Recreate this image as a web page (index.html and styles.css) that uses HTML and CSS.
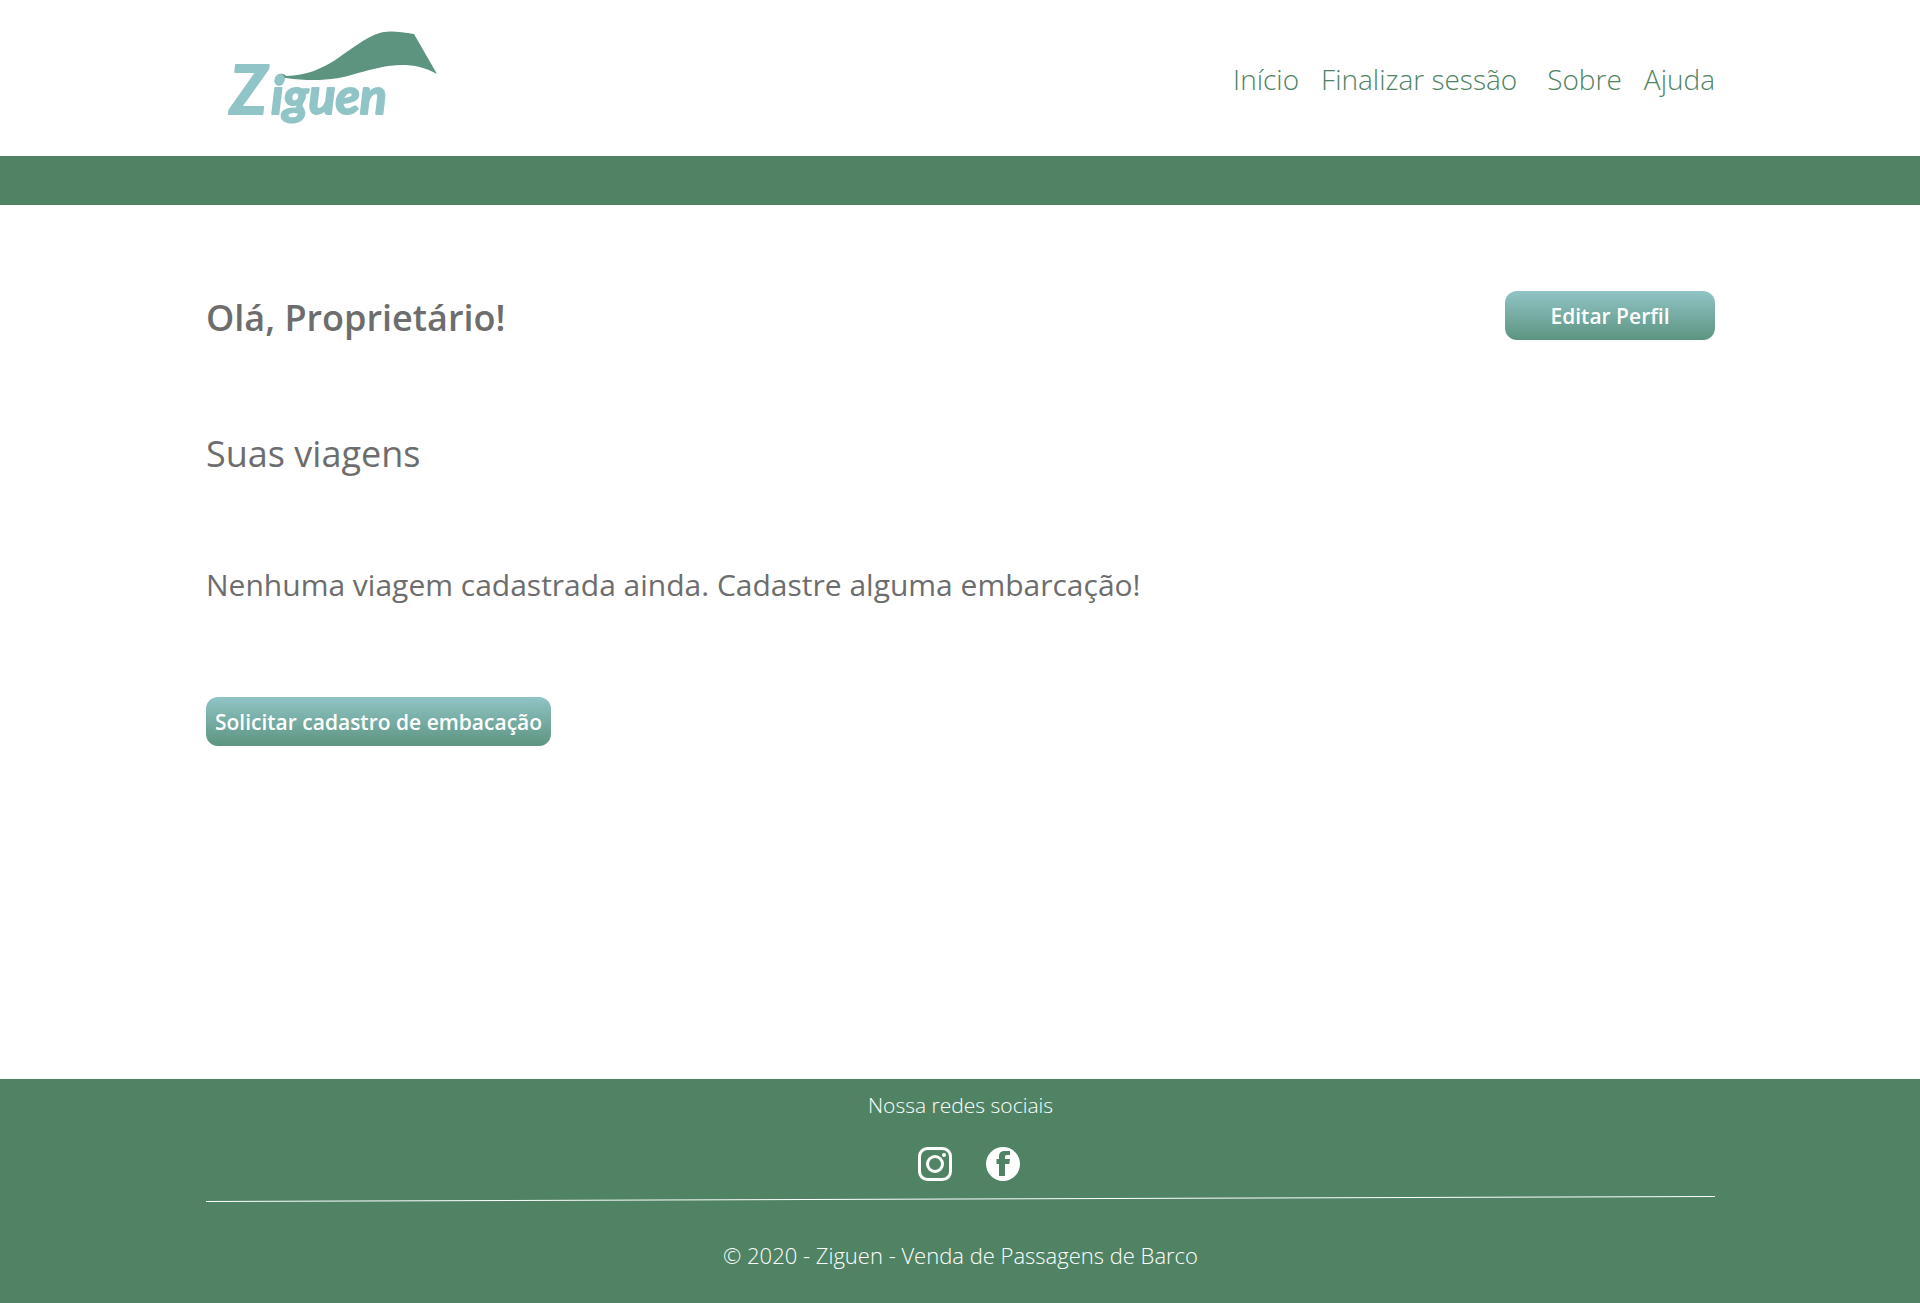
FILE: index.html
```html
<!DOCTYPE html>
<html lang="pt-BR">
<head>
<meta charset="utf-8">
<meta name="viewport" content="width=device-width, initial-scale=1">
<title>Ziguen - Venda de Passagens de Barco</title>
<link rel="stylesheet" href="styles.css">
</head>
<body>
<header class="header container">
  <a class="logo" href="#" aria-label="Ziguen">
    <svg width="232" height="120" viewBox="0 0 232 120">
      <text class="logo-initial" x="24" y="84">Z</text>
      <text class="logo-rest" x="65" y="84">iguen</text>
      <path d="M69 49C71 42 78 43 80 46C122 45 138 19 168 5C179 0 190 1 208 4L231 44C203 28 175 37 152 43C132 50 108 52 80 48Z" fill="#5c9480"/>
      <circle cx="74" cy="49" r="5" fill="#91c4c6"/>
    </svg>
  </a>
  <nav class="nav">
    <a href="#">Início</a>
    <a class="nav-session" href="#">Finalizar sessão</a>
    <a href="#">Sobre</a>
    <a href="#">Ajuda</a>
  </nav>
</header>
<div class="band"></div>
<main class="main container">
  <div class="greeting">
    <h1>Olá, Proprietário!</h1>
    <button class="button button-profile" type="button">Editar Perfil</button>
  </div>
  <h2>Suas viagens</h2>
  <p class="empty">Nenhuma viagem cadastrada ainda. Cadastre alguma embarcação!</p>
  <button class="button button-request" type="button">Solicitar cadastro de embacação</button>
</main>
<footer class="footer container">
  <p>Nossa redes sociais</p>
  <div class="social">
    <a href="#" aria-label="Instagram">
      <svg width="34" height="34" viewBox="0 0 34 34" fill="none" stroke="#fff" stroke-width="3">
        <rect x="1.5" y="1.5" width="31" height="31" rx="8"/>
        <circle cx="17" cy="17" r="7.5"/>
        <circle cx="26" cy="8" r="2" fill="#fff" stroke="none"/>
      </svg>
    </a>
    <a href="#" aria-label="Facebook">
      <svg width="34" height="34" viewBox="0 0 34 34">
        <circle cx="17" cy="17" r="17" fill="#fff"/>
        <path d="M13 29V17H10.500V12H13V9.500C13 5.500 15 4 19 4H24V8H21C19.300 8 19 8.700 19 10V12H24L23.300 17H19V29Z" fill="#508364"/>
      </svg>
    </a>
  </div>
  <svg class="divider" height="6" viewBox="0 0 1509 6" preserveAspectRatio="none"><path d="M0 5.500L1509 .5" stroke="#fff" vector-effect="non-scaling-stroke"/></svg>
  <p class="copyright">© 2020 - Ziguen - Venda de Passagens de Barco</p>
</footer>
</body>
</html>
```
FILE: styles.css
```css
* { box-sizing: border-box; }

body {
  display: flex;
  flex-direction: column;
  min-height: 100vh;
  margin: 0;
  background: #fff;
  color: #6d6d6d;
  font-family: "Open Sans", "Noto Sans", sans-serif;
}

h1, h2, p { margin: 0; }

.container { padding-inline: 206px 205px; }

.header {
  display: flex;
  justify-content: space-between;
  align-items: flex-start;
  height: 156px;
  padding-top: 30px;
}

.logo svg { display: block; }

.logo-initial,
.logo-rest {
  fill: #91c4c6;
  stroke: #91c4c6;
  stroke-width: 2;
  stroke-linejoin: round;
  font-family: Lato, sans-serif;
  font-style: italic;
  font-weight: 700;
}

.logo-initial { font-size: 66px; }
.logo-rest { font-size: 50px; }

.nav {
  display: flex;
  gap: 22px;
  padding-top: 27px;
  font-size: 28px;
  font-weight: 300;
  line-height: 44px;
}

.nav a {
  color: #508364;
  text-decoration: none;
}

.nav-session { margin-right: 8px; }

.band {
  height: 49px;
  background: #508364;
}

.main {
  flex: 1;
  display: flex;
  flex-direction: column;
  align-items: flex-start;
  padding-top: 86px;
  padding-bottom: 48px;
}

.greeting {
  align-self: stretch;
  display: flex;
  justify-content: space-between;
}

h1 {
  font-size: 36px;
  font-weight: 600;
  line-height: 54px;
}

h2 {
  margin-top: 82px;
  font-size: 36px;
  font-weight: 400;
  line-height: 54px;
}

.empty {
  margin-top: 80px;
  font-size: 30px;
  line-height: 48px;
}

.button {
  height: 49px;
  padding: 0;
  border: 0;
  border-radius: 12px;
  background: linear-gradient(#91c4c6, #5c9480);
  color: #fff;
  font-family: inherit;
  font-size: 21px;
  font-weight: 600;
}

.button-profile { width: 210px; }

.button-request {
  width: 345px;
  margin-top: 88px;
}

.footer {
  display: flex;
  flex-direction: column;
  align-items: center;
  padding-top: 10px;
  padding-bottom: 32px;
  background: #508364;
  color: #fff;
  font-size: 21px;
  font-weight: 300;
  line-height: 32px;
}

.social {
  display: flex;
  gap: 34px;
  margin-top: 26px;
  padding-left: 16px;
}

.social svg { display: block; }

.divider {
  width: 100%;
  margin: 15px 0 37px;
}

.copyright { font-size: 22px; }
```
